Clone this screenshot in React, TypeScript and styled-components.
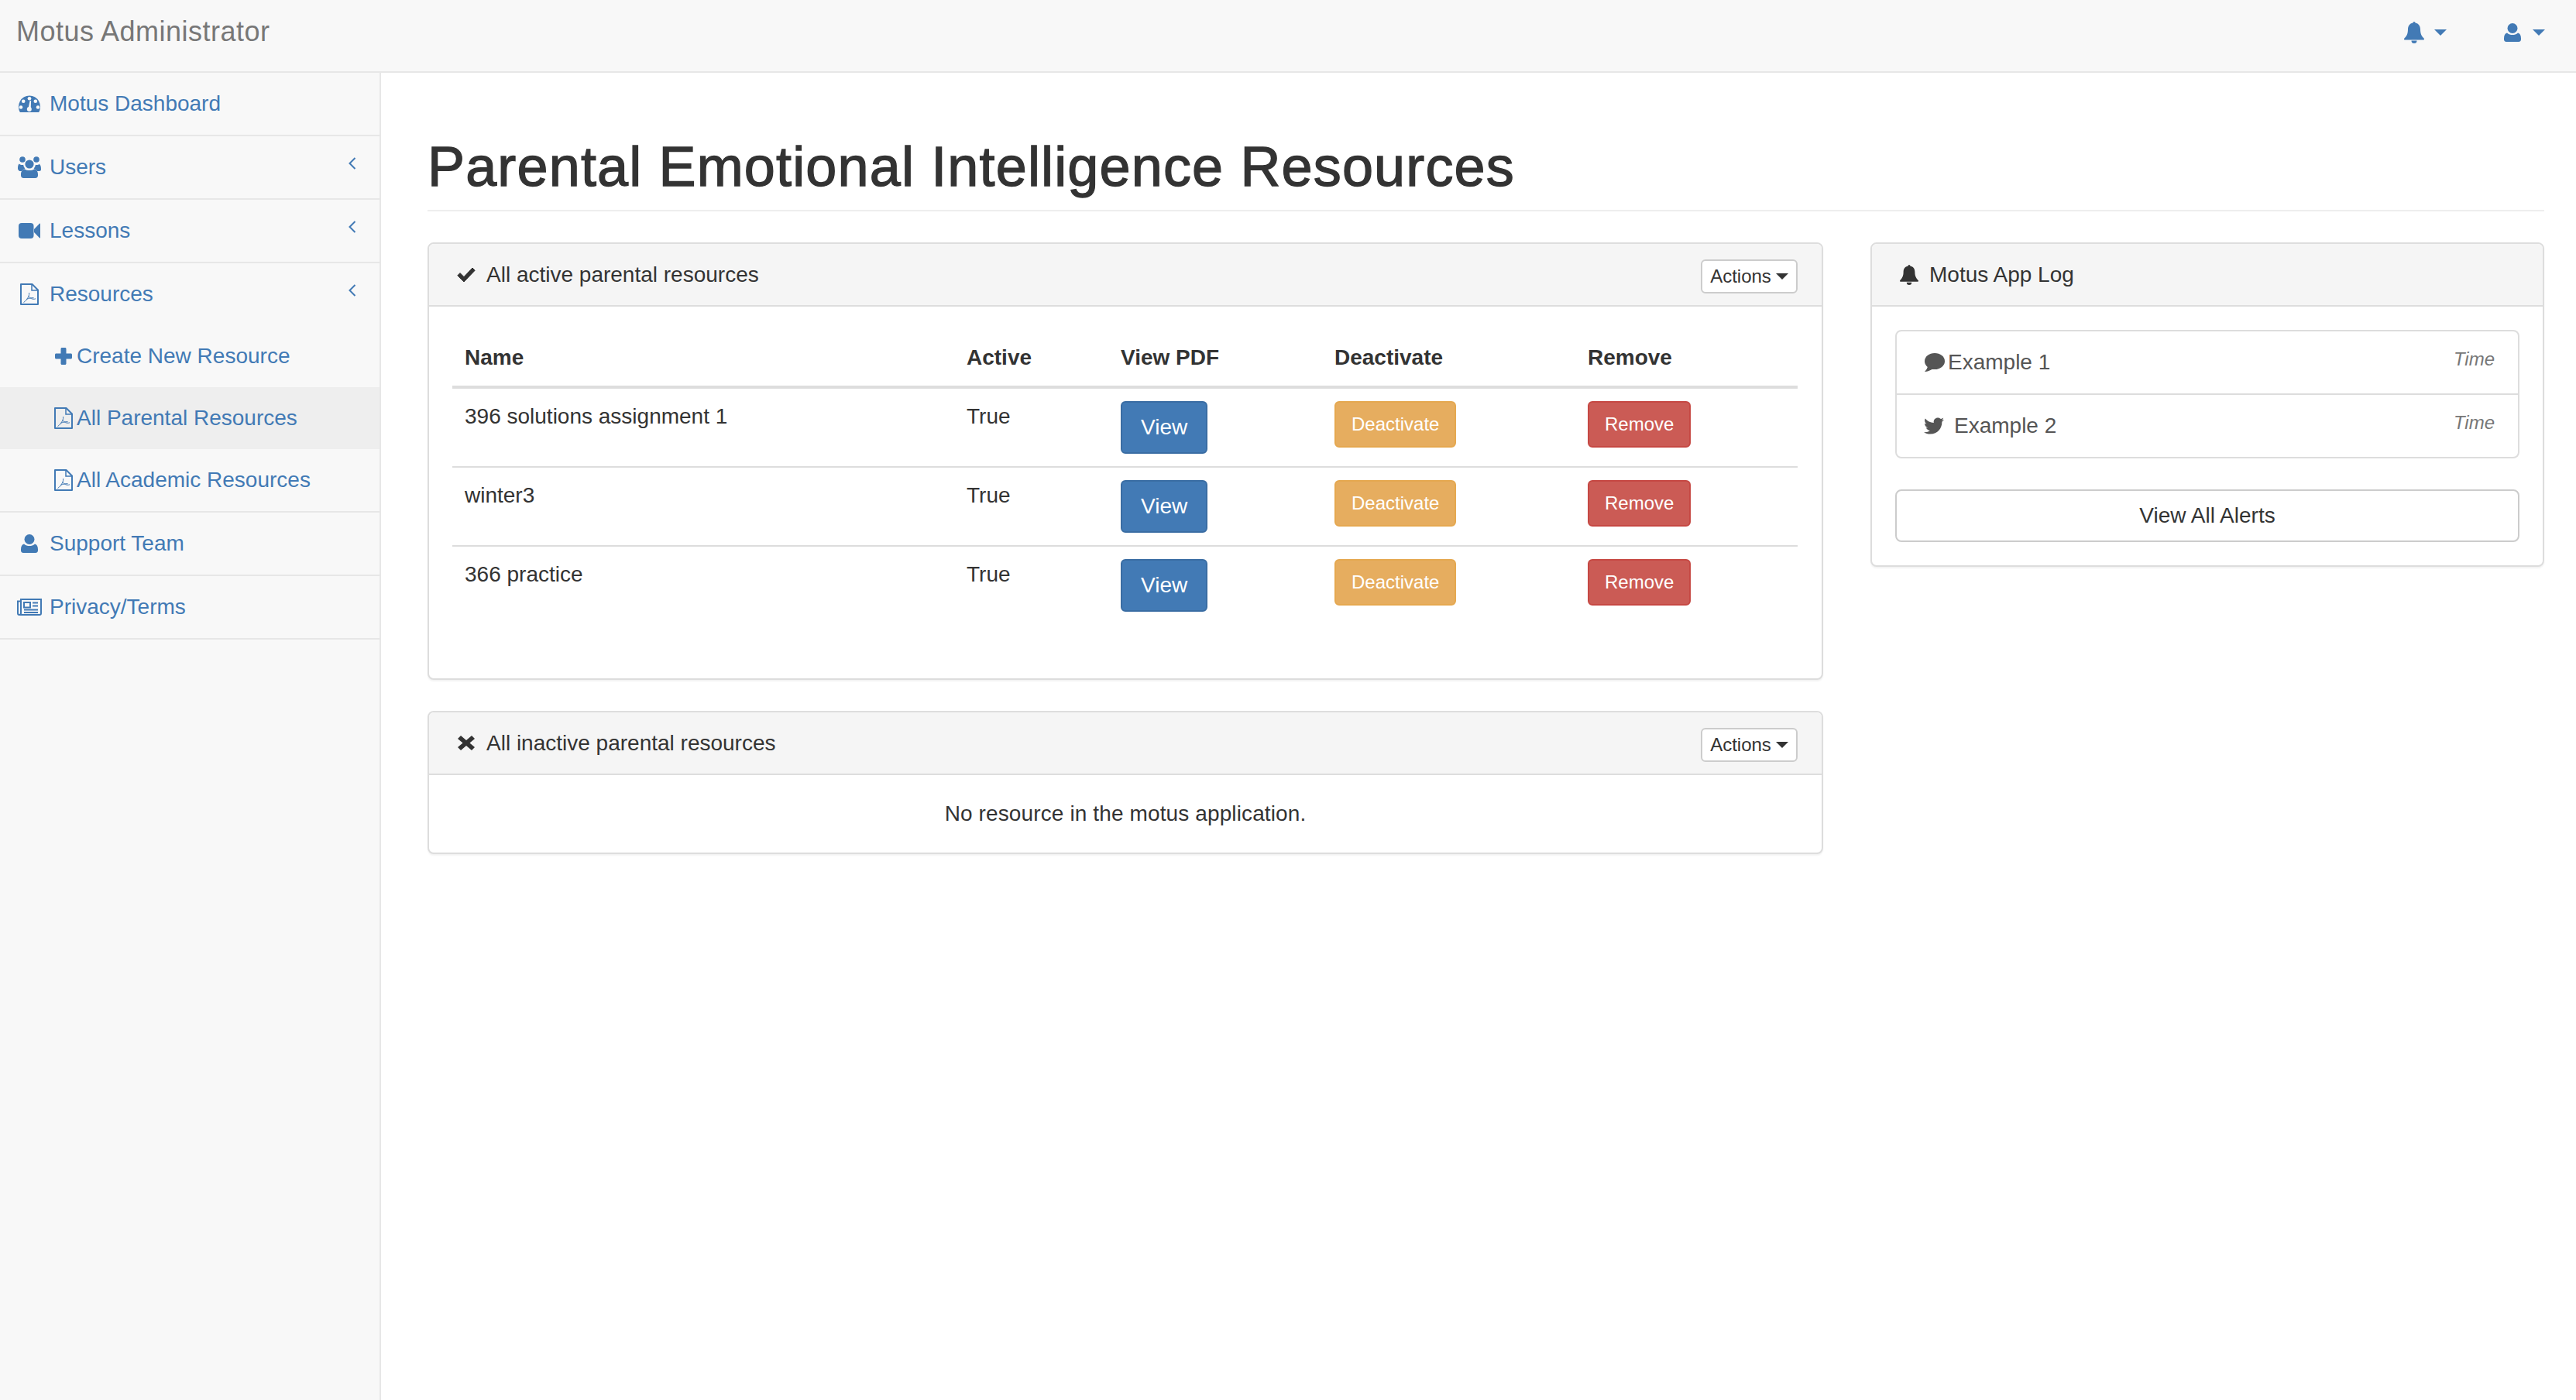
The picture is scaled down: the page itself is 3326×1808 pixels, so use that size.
import { ReactElement, ReactNode } from 'react';
import styled, { createGlobalStyle } from 'styled-components';
import { FaTwitter } from 'react-icons/fa';

const GlobalStyle = createGlobalStyle`
  * {
    box-sizing: border-box;
  }
  html, body {
    margin: 0;
    padding: 0;
    background: #fff;
  }
  body {
    font-family: "Liberation Sans", Arial, sans-serif;
    font-size: 28px;
    line-height: 40px;
    color: #333;
  }
`;

const BLUE = '#427ab5';

const Page = styled.div`
  width: 3326px;
  height: 1808px;
  display: flex;
  flex-direction: column;
  overflow: hidden;
`;

const TopBar = styled.header`
  height: 94px;
  flex: none;
  display: flex;
  justify-content: space-between;
  background: #f8f8f8;
  border-bottom: 2px solid #e7e7e7;
`;

const Brand = styled.div`
  padding: 21px 0 0 21px;
  font-size: 36px;
  letter-spacing: 0.5px;
  color: #777;
`;

const TopActions = styled.div`
  display: flex;
  align-items: flex-start;
  padding: 28px 40px 0 0;
  gap: 74px;
  color: ${BLUE};
`;

const TopAction = styled.div<{ $gap: number }>`
  display: flex;
  align-items: center;
  height: 28px;
  gap: ${({ $gap }) => $gap}px;
`;

const Caret = styled.span<{ $size: number; $color?: string }>`
  display: inline-block;
  width: 0;
  height: 0;
  border-top: ${({ $size }) => $size}px solid ${({ $color }) => $color || 'currentColor'};
  border-left: ${({ $size }) => $size}px solid transparent;
  border-right: ${({ $size }) => $size}px solid transparent;
`;

const Body = styled.div`
  flex: 1;
  display: flex;
  min-height: 0;
`;

const Sidebar = styled.nav`
  width: 492px;
  flex: none;
  background: #f8f8f8;
  border-right: 2px solid #e7e7e7;
`;

const SideGroup = styled.div`
  border-bottom: 2px solid #e7e7e7;
`;

const SideRow = styled.div`
  height: 80px;
  display: flex;
  align-items: center;
  padding: 0 30px 0 20px;
  color: ${BLUE};
`;

const SubRow = styled.div<{ $active?: boolean }>`
  height: 80px;
  display: flex;
  align-items: center;
  padding-left: 70px;
  color: ${BLUE};
  background: ${({ $active }) => ($active ? '#eee' : 'transparent')};
`;

const SideIcon = styled.span`
  width: 36px;
  margin-right: 8px;
  display: flex;
  justify-content: center;
  flex: none;
`;

const SubIcon = styled.span`
  width: 24px;
  margin-right: 5px;
  display: flex;
  justify-content: center;
  flex: none;
`;

const Chevron = styled.svg`
  margin-left: auto;
  margin-bottom: 11px;
`;

const Main = styled.main`
  flex: 1;
  padding: 82px 41px 0 60px;
`;

const PageTitle = styled.h1`
  margin: 0 0 40px;
  padding-bottom: 16px;
  font-size: 72px;
  line-height: 79px;
  font-weight: 400;
  letter-spacing: 1.15px;
  color: #333;
  -webkit-text-stroke: 1.3px #333;
  border-bottom: 2px solid #eee;
`;

const Columns = styled.div`
  display: grid;
  grid-template-columns: 1802px 870px;
  gap: 61px;
  align-items: start;
`;

const Column = styled.div`
  display: flex;
  flex-direction: column;
  gap: 40px;
`;

const Panel = styled.section`
  background: #fff;
  border: 2px solid #ddd;
  border-radius: 8px;
  box-shadow: 0 2px 2px rgba(0, 0, 0, 0.05);
  overflow: hidden;
`;

const PanelHeading = styled.div`
  height: 81px;
  display: flex;
  align-items: center;
  padding: 0 31px 0 36px;
  background: #f5f5f5;
  border-bottom: 2px solid #ddd;
`;

const HeadingIcon = styled.span`
  width: 24px;
  margin-right: 14px;
  display: flex;
  justify-content: center;
  flex: none;
`;

const ActionsButton = styled.button`
  margin: 4px 0 0 auto;
  height: 44px;
  width: 125px;
  padding: 0;
  display: flex;
  align-items: center;
  justify-content: center;
  gap: 6px;
  font: inherit;
  font-size: 24px;
  color: #333;
  background: #fff;
  border: 2px solid #ccc;
  border-radius: 6px;
`;

const TableBody = styled.div`
  padding: 30px;
`;

const Table = styled.table`
  width: 1737px;
  margin-bottom: 40px;
  border-collapse: collapse;
  table-layout: fixed;
`;

const HeadCell = styled.th<{ $width: number }>`
  width: ${({ $width }) => $width}px;
  padding: 16px;
  text-align: left;
  font-weight: 700;
  border-bottom: 4px solid #ddd;
`;

const Cell = styled.td`
  padding: 16px;
  vertical-align: top;
  border-top: 2px solid #ddd;
  tr:first-child > & {
    border-top: none;
  }
`;

const Button = styled.button<{ $bg: string; $border: string }>`
  font-family: inherit;
  color: #fff;
  background: ${({ $bg }) => $bg};
  border: 2px solid ${({ $border }) => $border};
  border-radius: 6px;
`;

const ViewButton = styled(Button)`
  display: block;
  height: 68px;
  padding: 0 24px;
  font-size: 28px;
`;

const SmallButton = styled(Button)`
  display: block;
  height: 60px;
  padding: 0 20px;
  font-size: 24px;
`;

const EmptyNote = styled.div`
  height: 100px;
  display: flex;
  align-items: center;
  justify-content: center;
  letter-spacing: 0.12px;
`;

const LogBody = styled.div`
  padding: 30px;
  display: flex;
  flex-direction: column;
  gap: 40px;
`;

const LogList = styled.div`
  border: 2px solid #ddd;
  border-radius: 8px;
`;

const LogItem = styled.div`
  height: 80px;
  display: flex;
  align-items: center;
  padding: 0 30px 0 34px;
  color: #555;
  & + & {
    height: 82px;
    border-top: 2px solid #ddd;
  }
`;

const LogIcon = styled.span<{ $gap: number }>`
  width: 28px;
  margin-right: ${({ $gap }) => $gap}px;
  display: flex;
  justify-content: center;
  flex: none;
`;

const LogTime = styled.em`
  margin: 0 0 8px auto;
  font-size: 24px;
  color: #777;
`;

const WideButton = styled.button`
  height: 68px;
  padding: 0;
  font: inherit;
  color: #333;
  background: #fff;
  border: 2px solid #ccc;
  border-radius: 8px;
`;

const DashboardIcon = (): ReactElement => (
  <svg width="28" height="22" viewBox="0 0 28 22">
    <path d="M1.800 22A14 14.500 0 1 1 26.200 22Z" fill={BLUE} />
    <g fill="#f8f8f8">
      <circle cx="14" cy="4.300" r="2.300" />
      <circle cx="6.200" cy="7.700" r="2.300" />
      <circle cx="21.800" cy="7.700" r="2.300" />
      <circle cx="3" cy="15.500" r="2.300" />
      <circle cx="25" cy="15.500" r="2.300" />
      <circle cx="13.800" cy="18" r="3" />
      <path d="M12.400 17.500 14.600 7h1.500l-.4 11z" />
    </g>
  </svg>
);

const UsersIcon = (): ReactElement => (
  <svg width="30" height="28" viewBox="0 0 30 28" fill={BLUE}>
    <circle cx="6" cy="4" r="3.800" />
    <circle cx="24" cy="4" r="3.800" />
    <circle cx="15" cy="10" r="5.600" />
    <path d="M1.800 9.600c1 1 2.500 1.500 4 1.500.6 0 1 0 1.400-.1.2 1.800 1 3.300 2.200 4.400-2.200.8-3.700 2-4.500 3.600H2.200C1 18 0 17.300 0 15.800c0-2.400.3-5.300 1.800-6.200z" />
    <path d="M28.200 9.600c-1 1-2.500 1.500-4 1.500-.6 0-1 0-1.400-.1-.2 1.800-1 3.300-2.200 4.400 2.200.8 3.700 2 4.500 3.600h2.700c1.200 0 2.200-.7 2.200-2.200 0-2.400-.3-5.300-1.800-6.200z" />
    <path d="M8.500 16.200c1.700 1.300 4 1.900 6.500 1.900s4.800-.6 6.500-1.900c2.900.6 4.500 3.500 4.500 7.200v1c0 2.200-1.600 3.600-3.500 3.600H7.500C5.600 28 4 26.600 4 24.400v-1c0-3.700 1.600-6.600 4.500-7.200z" />
  </svg>
);

const VideoIcon = (): ReactElement => (
  <svg width="28" height="20" viewBox="0 0 28 20" fill={BLUE}>
    <rect x="0" y="0" width="19.500" height="20" rx="4" />
    <path d="M20 8 27 .8c.4-.4 1-.2 1 .4v17.600c0 .6-.6.8-1 .4L20 12z" />
  </svg>
);

const PdfIcon = (): ReactElement => (
  <svg width="24" height="28" viewBox="0 0 24 28" fill="none" stroke={BLUE}>
    <path d="M1 1h14.500L23 8.500V27H1z" strokeWidth="2" strokeLinejoin="round" />
    <path d="M15 1v8h8" strokeWidth="1.500" />
    <path d="M4.500 24.500c2.500-1.500 5-4.500 6.500-8 .6-1.500.8-3 .6-4.500M11 16.500c1 1.800 2.500 3 5 3.600 1.500.3 3 .2 4-.3M8 20.500c3-1.200 6.500-2 9.500-1.900" strokeWidth="1" />
  </svg>
);

const PlusIcon = (): ReactElement => (
  <svg width="22" height="22" viewBox="0 0 22 22" fill={BLUE}>
    <path d="M9 0h4c.8 0 1.500.7 1.500 1.500v6h6c.8 0 1.500.7 1.500 1.500v4c0 .8-.7 1.500-1.500 1.500h-6v6c0 .8-.7 1.500-1.500 1.500H9c-.8 0-1.500-.7-1.500-1.500v-6h-6C.7 14.500 0 13.800 0 13V9c0-.8.7-1.500 1.500-1.500h6v-6C7.500.7 8.200 0 9 0z" />
  </svg>
);

const UserIcon = (): ReactElement => (
  <svg width="22" height="24" viewBox="0 0 22 24" fill={BLUE}>
    <circle cx="11" cy="6.500" r="6.500" />
    <path d="M4 12.500C6 14.500 8.500 15 11 15s5-.5 7-2.500c2.500.5 4 3 4 7V21c0 2-1.500 3-3 3H3c-1.500 0-3-1-3-3v-1.500c0-4 1.500-6.500 4-7z" />
  </svg>
);

const NewspaperIcon = (): ReactElement => (
  <svg width="32" height="22" viewBox="0 0 32 22" fill="none" stroke={BLUE} strokeWidth="2">
    <path d="M5 3.500H1V19c0 1.200.8 2 2 2h26c1.200 0 2-.8 2-2V1H5v18c0 1.200-.8 2-2 2" />
    <rect x="9" y="5" width="8" height="6.500" />
    <path d="M20 5.500h7M20 9.500h7M9 14.500h18M9 18h18" strokeWidth="1.800" />
  </svg>
);

const BellIcon = ({ color }: { color: string }): ReactElement => (
  <svg width="26" height="28" viewBox="0 0 26 28" fill={color}>
    <path d="M13 0c1 0 1.500.8 1.500 1.600C19 2.400 21 6 21 10c0 6 2 9 5 12 0 1-.5 1.500-1 1.500H1c-.5 0-1-.5-1-1.500 3-3 5-6 5-12 0-4 2-7.600 6.500-8.400C11.500.8 12 0 13 0z" />
    <path d="M9.500 24.500a3.500 3.500 0 0 0 7 0z" />
  </svg>
);

const CommentIcon = (): ReactElement => (
  <svg width="28" height="24" viewBox="0 0 28 24" fill="#555">
    <ellipse cx="15" cy="10.500" rx="13" ry="10.500" />
    <path d="M6 16c0 3-2 6-4 8 4 0 8-2 11-4z" />
  </svg>
);

const CheckIcon = (): ReactElement => (
  <svg width="24" height="20" viewBox="0 0 24 20" fill="#333" stroke="#333" strokeLinejoin="round">
    <path d="M.8 10.800 4 7.600l5 5L20 1l3.200 3.200L9 19z" />
  </svg>
);

const TimesIcon = (): ReactElement => (
  <svg width="22" height="19" viewBox="0 0 22 19" fill="#333">
    <path d="M4 0l7 6 7-6 4 4-6.500 5.500L22 15l-4 4-7-6-7 6-4-4 6.500-5.500L0 4z" />
  </svg>
);

const AngleLeft = (): ReactElement => (
  <Chevron width="10" height="16" viewBox="0 0 10 16" fill="none" stroke={BLUE} strokeWidth="2">
    <path d="M8.500 1 1.500 8l7 7" />
  </Chevron>
);

interface SideItemProps {
  icon: ReactNode;
  label: string;
  expandable?: boolean;
  children?: ReactNode;
}

const SideItem = ({ icon, label, expandable, children }: SideItemProps): ReactElement => (
  <SideGroup>
    <SideRow>
      <SideIcon>{icon}</SideIcon>
      {label}
      {expandable && <AngleLeft />}
    </SideRow>
    {children}
  </SideGroup>
);

const RESOURCES = ['396 solutions assignment 1', 'winter3', '366 practice'];

const App = (): ReactElement => (
  <Page>
    <GlobalStyle />
    <TopBar>
      <Brand>Motus Administrator</Brand>
      <TopActions>
        <TopAction $gap={13}>
          <BellIcon color={BLUE} />
          <Caret $size={8} />
        </TopAction>
        <TopAction $gap={15}>
          <UserIcon />
          <Caret $size={8} />
        </TopAction>
      </TopActions>
    </TopBar>
    <Body>
      <Sidebar>
        <SideItem icon={<DashboardIcon />} label="Motus Dashboard" />
        <SideItem icon={<UsersIcon />} label="Users" expandable />
        <SideItem icon={<VideoIcon />} label="Lessons" expandable />
        <SideItem icon={<PdfIcon />} label="Resources" expandable>
          <SubRow>
            <SubIcon>
              <PlusIcon />
            </SubIcon>
            Create New Resource
          </SubRow>
          <SubRow $active>
            <SubIcon>
              <PdfIcon />
            </SubIcon>
            All Parental Resources
          </SubRow>
          <SubRow>
            <SubIcon>
              <PdfIcon />
            </SubIcon>
            All Academic Resources
          </SubRow>
        </SideItem>
        <SideItem icon={<UserIcon />} label="Support Team" />
        <SideItem icon={<NewspaperIcon />} label="Privacy/Terms" />
      </Sidebar>
      <Main>
        <PageTitle>Parental Emotional Intelligence Resources</PageTitle>
        <Columns>
          <Column>
            <Panel>
              <PanelHeading>
                <HeadingIcon>
                  <CheckIcon />
                </HeadingIcon>
                All active parental resources
                <ActionsButton>
                  Actions <Caret $size={8} $color="#333" />
                </ActionsButton>
              </PanelHeading>
              <TableBody>
                <Table>
                  <thead>
                    <tr>
                      <HeadCell $width={648}>Name</HeadCell>
                      <HeadCell $width={199}>Active</HeadCell>
                      <HeadCell $width={276}>View PDF</HeadCell>
                      <HeadCell $width={327}>Deactivate</HeadCell>
                      <HeadCell $width={287}>Remove</HeadCell>
                    </tr>
                  </thead>
                  <tbody>
                    {RESOURCES.map((name) => (
                      <tr key={name}>
                        <Cell>{name}</Cell>
                        <Cell>True</Cell>
                        <Cell>
                          <ViewButton $bg="#427ab5" $border="#3a6da3">
                            View
                          </ViewButton>
                        </Cell>
                        <Cell>
                          <SmallButton $bg="#e6ad5f" $border="#e5a850">
                            Deactivate
                          </SmallButton>
                        </Cell>
                        <Cell>
                          <SmallButton $bg="#cb5b55" $border="#c64843">
                            Remove
                          </SmallButton>
                        </Cell>
                      </tr>
                    ))}
                  </tbody>
                </Table>
              </TableBody>
            </Panel>
            <Panel>
              <PanelHeading>
                <HeadingIcon>
                  <TimesIcon />
                </HeadingIcon>
                All inactive parental resources
                <ActionsButton>
                  Actions <Caret $size={8} $color="#333" />
                </ActionsButton>
              </PanelHeading>
              <EmptyNote>No resource in the motus application.</EmptyNote>
            </Panel>
          </Column>
          <Panel>
            <PanelHeading>
              <HeadingIcon>
                <BellIcon color="#333" />
              </HeadingIcon>
              Motus App Log
            </PanelHeading>
            <LogBody>
              <LogList>
                <LogItem>
                  <LogIcon $gap={4}>
                    <CommentIcon />
                  </LogIcon>
                  Example 1
                  <LogTime>Time</LogTime>
                </LogItem>
                <LogItem>
                  <LogIcon $gap={12}>
                    <FaTwitter size={26} color="#555" />
                  </LogIcon>
                  Example 2
                  <LogTime>Time</LogTime>
                </LogItem>
              </LogList>
              <WideButton>View All Alerts</WideButton>
            </LogBody>
          </Panel>
        </Columns>
      </Main>
    </Body>
  </Page>
);

export default App;
